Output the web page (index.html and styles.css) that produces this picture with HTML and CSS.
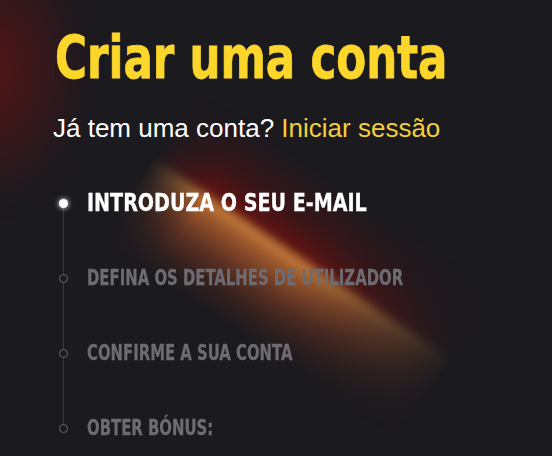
FILE: index.html
```html
<!DOCTYPE html>
<html lang="pt">
<head>
<meta charset="utf-8">
<link rel="stylesheet" href="styles.css">
</head>
<body>
<div class="page">
  <div class="glow-corner"></div>
  <div class="glow-beam"></div>
  <div class="content">
    <h1 class="title"><span class="squeeze">Criar uma conta</span></h1>
    <p class="subtitle">Já tem uma conta? <a class="link" href="#">Iniciar sessão</a></p>
    <ul class="steps">
      <li class="step active"><span class="dot"></span><span class="label squeeze">INTRODUZA O SEU E-MAIL</span></li>
      <li class="step"><span class="dot"></span><span class="label squeeze">DEFINA OS DETALHES DE UTILIZADOR</span></li>
      <li class="step"><span class="dot"></span><span class="label squeeze">CONFIRME A SUA CONTA</span></li>
      <li class="step"><span class="dot"></span><span class="label squeeze">OBTER BÓNUS:</span></li>
    </ul>
  </div>
</div>
</body>
</html>
```
FILE: styles.css
```css
html, body {
  margin: 0;
  padding: 0;
  background: #1b1a1f;
}
.page {
  position: relative;
  width: 552px;
  height: 456px;
  overflow: hidden;
  background: #1b1a1f;
}
.glow-corner {
  position: absolute;
  left: -110px;
  top: -70px;
  width: 200px;
  height: 280px;
  background: radial-gradient(closest-side, rgba(100, 20, 22, 0.8), rgba(100, 20, 22, 0));
  filter: blur(10px);
}
.glow-beam {
  position: absolute;
  left: 120px;
  top: 163px;
  width: 375px;
  height: 200px;
  transform: rotate(34deg);
  background: linear-gradient(to bottom,
    rgba(90, 14, 14, 0) 10%,
    rgba(95, 15, 15, 0.4) 32%,
    rgba(110, 18, 15, 0.85) 49.4%,
    rgba(220, 145, 65, 0.92) 50.2%,
    rgba(195, 105, 48, 0.78) 58%,
    rgba(155, 72, 38, 0.55) 72%,
    rgba(120, 50, 30, 0.28) 85%,
    rgba(120, 50, 30, 0) 98%);
  -webkit-mask-image: linear-gradient(to right, transparent 0%, #000 18%, #000 50%, transparent 97%);
  mask-image: linear-gradient(to right, transparent 0%, #000 18%, #000 50%, transparent 97%);
  filter: blur(5px);
}
.content {
  position: relative;
  padding: 29px 0 0 55px;
}
.squeeze {
  display: inline-block;
  transform-origin: left center;
  white-space: nowrap;
}
.title {
  margin: 0;
  font-family: "DejaVu Sans Condensed", "DejaVu Sans", sans-serif;
  font-weight: bold;
  font-size: 58px;
  line-height: 58px;
  color: #fcd62a;
  -webkit-text-stroke: 0.8px #fcd62a;
}
.title .squeeze {
  transform: scaleX(0.835);
}
.subtitle {
  margin: 28px 0 0 -2px;
  font-family: "Liberation Sans", Arial, sans-serif;
  font-size: 26px;
  line-height: 26px;
  color: #ffffff;
}
.link {
  color: #f3cf3a;
  text-decoration: none;
}
.steps {
  position: relative;
  list-style: none;
  margin: 50px 0 0 0;
  padding: 0;
  display: flex;
  flex-direction: column;
  gap: 51px;
}
.steps::before {
  content: "";
  position: absolute;
  left: 7.5px;
  top: 14px;
  bottom: 8px;
  width: 1px;
  background: #3a393f;
}
.step {
  position: relative;
  display: flex;
  align-items: center;
  height: 24px;
  font-family: "DejaVu Sans Condensed", "DejaVu Sans", sans-serif;
  font-weight: bold;
  font-size: 20.5px;
  line-height: 24px;
  color: #6d6c72;
  -webkit-text-stroke: 0.3px #6d6c72;
}
.dot {
  box-sizing: border-box;
  flex: none;
  width: 9px;
  height: 9px;
  margin: 0 19px 0 3.5px;
  border-radius: 50%;
  border: 1.5px solid #6a6970;
  background: #1b1a1f;
}
.step .label {
  transform: scaleX(0.807);
}
.step.active {
  font-size: 24px;
  color: #ffffff;
  -webkit-text-stroke: 0.3px #ffffff;
}
.step.active .label {
  transform: scaleX(0.885);
}
.step.active .dot {
  border: none;
  background: #ffffff;
  box-shadow: 0 0 4px 1px rgba(255, 255, 255, 0.6);
}
```
